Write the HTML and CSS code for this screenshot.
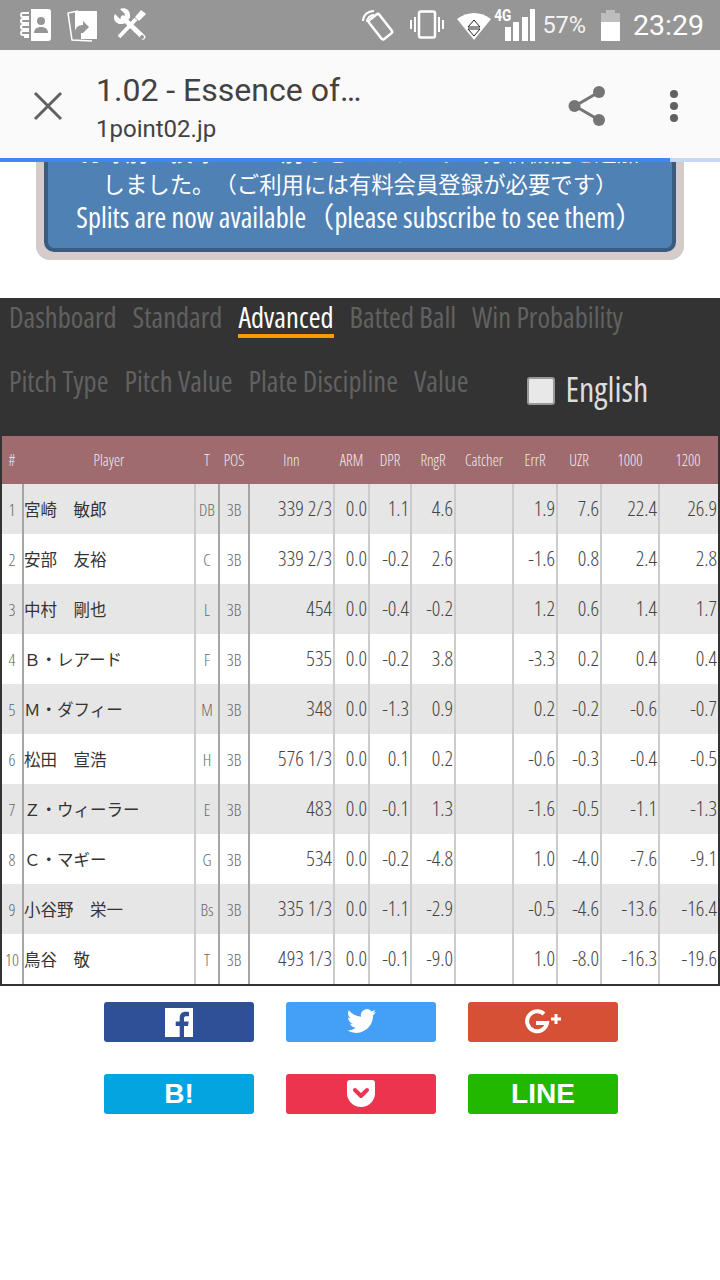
FILE: index.html
```html
<!DOCTYPE html>
<html lang="en">
<head>
    <meta charset="UTF-8">
    <meta name="viewport" content="width=device-width, initial-scale=1.0">
    <title>1.02 - Essence of Baseball</title>
    <link rel="stylesheet" href="styles.css">
</head>
<body>
    <header class="chrome">
        <div class="status-bar">
            <div class="status-left">
                <svg width="32" height="34" viewBox="0 0 32 34"><path fill="#fff" d="M11 1h17a3 3 0 0 1 3 3v26a3 3 0 0 1-3 3H11z"/><circle cx="21" cy="13" r="4" fill="#969696"/><path fill="#969696" d="M14 25c0-4 3-6 7-6s7 2 7 6z"/><path fill="none" stroke="#fff" stroke-width="2" d="M9 5H3a2 2 0 0 0 0 4h6M9 11H3a2 2 0 0 0 0 4h6M9 17H3a2 2 0 0 0 0 4h6M9 23H3a2 2 0 0 0 0 4h6M9 29H4"/></svg>
                <svg width="32" height="34" viewBox="0 0 32 34"><path fill="#fff" d="M14 2h16v28H14v-6h2l6-6-6-6v4c-4 0-7 2-8 6V2z" transform="translate(0 1)"/><path fill="none" stroke="#fff" stroke-width="1.5" d="M11 3 1 5l4 27 20 1"/></svg>
                <svg width="34" height="34" viewBox="0 0 34 34"><path fill="none" stroke="#fff" stroke-width="5" stroke-linecap="round" d="M9 10 29 29"/><path fill="#fff" d="M1 6 6 11l4-1 1-4L6 1c5-2 10 1 10 6 0 2 0 3-1 4l-4 4c-1 1-3 1-4 1-5 0-9-5-6-10z"/><path fill="none" stroke="#fff" stroke-width="4" d="M5 29 22 11"/><path fill="#fff" d="m21 9 6-7 5 4-7 7z"/><circle cx="28" cy="29" r="2" fill="#969696"/></svg>
            </div>
            <div class="status-right">
                <svg width="34" height="32" viewBox="0 0 34 32"><path fill="none" stroke="#fff" stroke-width="2" d="M1 12C1 6 6 2 12 2M5 13c0-4 3-7 7-7"/><rect x="12" y="6" width="13" height="24" rx="2" fill="none" stroke="#fff" stroke-width="2.5" transform="rotate(-38 18 18)"/></svg>
                <svg class="icon-vibrate" width="36" height="30" viewBox="0 0 36 30"><rect x="10" y="1.500" width="16" height="26" rx="2" fill="none" stroke="#fff" stroke-width="2.500"/><path fill="#fff" d="M1 10h2v9H1zM5 7h2v15H5zM29 7h2v15h-2zM33 10h2v9h-2z"/></svg>
                <svg class="icon-wifi" width="34" height="28" viewBox="0 0 34 28"><path fill="#fff" d="M0 7c10-8 24-8 34 0L17 28z"/><path fill="none" stroke="#222" stroke-width="1" d="M11 15 17 8l6 7zM11 17h12l-6 7z"/></svg>
                <div class="signal">
                    <span class="signal-label">4G</span>
                    <svg width="31" height="32" viewBox="0 0 31 32"><path fill="#fff" d="M0 18h6v14H0zM8 13h6v19H8zM17 8h6v24h-6zM25 0h5v32h-5z"/></svg>
                </div>
                <span class="battery-pct">57%</span>
                <div class="battery"><div class="battery-cap"></div><div class="battery-body"></div></div>
                <span class="clock">23:29</span>
            </div>
        </div>
        <div class="toolbar">
            <svg class="close-icon" width="30" height="30" viewBox="0 0 30 30"><path stroke="#616161" stroke-width="3" d="M2 2 28 28M28 2 2 28"/></svg>
            <div class="title-block">
                <div class="page-title">1.02 - Essence of…</div>
                <div class="page-url">1point02.jp</div>
            </div>
            <svg class="share-icon" width="38" height="40" viewBox="0 0 38 40"><path stroke="#757575" stroke-width="3" fill="none" d="M31 6 7 20l24 14"/><circle cx="31" cy="6" r="6" fill="#757575"/><circle cx="6.500" cy="20" r="6" fill="#757575"/><circle cx="31" cy="34" r="6" fill="#757575"/></svg>
            <div class="more-icon"><span></span><span></span><span></span></div>
        </div>
        <div class="progress"><div class="progress-fill"></div></div>
    </header>

    <main>
        <div class="notice-wrap">
            <div class="notice">
                <p>打球別・投球ゾーン別などのスプリット分析機能を追加</p>
                <p>しました。（ご利用には有料会員登録が必要です）</p>
                <p class="notice-en">Splits are now available（please subscribe to see them）</p>
            </div>
        </div>

        <section class="panel">
            <nav class="tabs">
                <a>Dashboard</a><a>Standard</a><a class="active">Advanced</a><a>Batted Ball</a><a>Win Probability</a>
            </nav>
            <div class="tabs tabs-second">
                <a>Pitch Type</a><a>Pitch Value</a><a>Plate Discipline</a><a>Value</a>
                <label class="lang"><span class="checkbox"></span>English</label>
            </div>
            <table class="stats">
                <thead>
                    <tr><th class="c-no">#</th><th class="c-name">Player</th><th class="c-team">T</th><th class="c-pos">POS</th><th class="c-inn">Inn</th><th class="c-arm">ARM</th><th class="c-dpr">DPR</th><th class="c-rng">RngR</th><th class="c-cat">Catcher</th><th class="c-err">ErrR</th><th class="c-uzr">UZR</th><th class="c-k">1000</th><th class="c-kk">1200</th></tr>
                </thead>
                <tbody>
                    <tr><td class="no">1</td><td class="name">宮崎　敏郎</td><td class="team">DB</td><td class="pos">3B</td><td>339 2/3</td><td>0.0</td><td>1.1</td><td>4.6</td><td></td><td>1.9</td><td>7.6</td><td>22.4</td><td>26.9</td></tr>
                    <tr><td class="no">2</td><td class="name">安部　友裕</td><td class="team">C</td><td class="pos">3B</td><td>339 2/3</td><td>0.0</td><td>-0.2</td><td>2.6</td><td></td><td>-1.6</td><td>0.8</td><td>2.4</td><td>2.8</td></tr>
                    <tr><td class="no">3</td><td class="name">中村　剛也</td><td class="team">L</td><td class="pos">3B</td><td>454</td><td>0.0</td><td>-0.4</td><td>-0.2</td><td></td><td>1.2</td><td>0.6</td><td>1.4</td><td>1.7</td></tr>
                    <tr><td class="no">4</td><td class="name">Ｂ・レアード</td><td class="team">F</td><td class="pos">3B</td><td>535</td><td>0.0</td><td>-0.2</td><td>3.8</td><td></td><td>-3.3</td><td>0.2</td><td>0.4</td><td>0.4</td></tr>
                    <tr><td class="no">5</td><td class="name">Ｍ・ダフィー</td><td class="team">M</td><td class="pos">3B</td><td>348</td><td>0.0</td><td>-1.3</td><td>0.9</td><td></td><td>0.2</td><td>-0.2</td><td>-0.6</td><td>-0.7</td></tr>
                    <tr><td class="no">6</td><td class="name">松田　宣浩</td><td class="team">H</td><td class="pos">3B</td><td>576 1/3</td><td>0.0</td><td>0.1</td><td>0.2</td><td></td><td>-0.6</td><td>-0.3</td><td>-0.4</td><td>-0.5</td></tr>
                    <tr><td class="no">7</td><td class="name">Ｚ・ウィーラー</td><td class="team">E</td><td class="pos">3B</td><td>483</td><td>0.0</td><td>-0.1</td><td>1.3</td><td></td><td>-1.6</td><td>-0.5</td><td>-1.1</td><td>-1.3</td></tr>
                    <tr><td class="no">8</td><td class="name">Ｃ・マギー</td><td class="team">G</td><td class="pos">3B</td><td>534</td><td>0.0</td><td>-0.2</td><td>-4.8</td><td></td><td>1.0</td><td>-4.0</td><td>-7.6</td><td>-9.1</td></tr>
                    <tr><td class="no">9</td><td class="name">小谷野　栄一</td><td class="team">Bs</td><td class="pos">3B</td><td>335 1/3</td><td>0.0</td><td>-1.1</td><td>-2.9</td><td></td><td>-0.5</td><td>-4.6</td><td>-13.6</td><td>-16.4</td></tr>
                    <tr><td class="no">10</td><td class="name">鳥谷　敬</td><td class="team">T</td><td class="pos">3B</td><td>493 1/3</td><td>0.0</td><td>-0.1</td><td>-9.0</td><td></td><td>1.0</td><td>-8.0</td><td>-16.3</td><td>-19.6</td></tr>
                </tbody>
            </table>
        </section>

        <div class="share-grid">
            <a class="share fb"><svg width="28" height="30" viewBox="0 0 28 30"><path fill="#fff" d="M0 1h28v29h-9V19h4l.7-4.500H19v-3c0-1.500.6-2.300 2.300-2.300H24V5c-1-.1-2-.2-3.500-.2-3.500 0-5.800 2.100-5.800 6v3.700h-4V19h4v11H0z"/></svg></a>
            <a class="share tw"><svg width="32" height="28" viewBox="0 0 32 28"><path fill="#fff" d="M31 4c-1 .5-2.200.8-3.400 1 1.200-.7 2.200-1.900 2.600-3.300-1.100.7-2.400 1.200-3.800 1.500a6 6 0 0 0-10.300 5.500C11.200 8.400 6.800 6 3.800 2.300a6 6 0 0 0 1.900 8c-1 0-1.900-.3-2.700-.7 0 2.900 2 5.300 4.800 5.900-.9.200-1.800.3-2.700.1.800 2.400 3 4.100 5.600 4.200A12 12 0 0 1 2 22.300 17 17 0 0 0 28 7.200c1.200-.8 2.200-2 3-3.200z"/></svg></a>
            <a class="share gp"><svg width="38" height="28" viewBox="0 0 38 28"><path fill="none" stroke="#fff" stroke-width="4" d="M20 6a10 10 0 1 0 3 9H12"/><path stroke="#fff" stroke-width="3" d="M27 11h10M32 6v10"/></svg></a>
            <a class="share hb">B!</a>
            <a class="share pk"><svg width="28" height="28" viewBox="0 0 28 28"><path fill="#fff" d="M3 0h22a3 3 0 0 1 3 3v10a14 14 0 0 1-28 0V3a3 3 0 0 1 3-3z"/><path fill="none" stroke="#ec344e" stroke-width="4" stroke-linecap="round" stroke-linejoin="round" d="m8 10 6 6 6-6"/></svg></a>
            <a class="share ln">LINE</a>
        </div>
    </main>
</body>
</html>
```

FILE: styles.css
```css
body {
    margin: 0;
    width: 720px;
    height: 1280px;
    overflow: hidden;
    background-color: #fff;
    font-family: "Open Sans", "Noto Sans CJK JP", sans-serif;
    font-stretch: 75%;
    text-spacing-trim: space-all;
}
.chrome {
    position: absolute;
    top: 0;
    left: 0;
    width: 720px;
    z-index: 2;
    font-stretch: 100%;
}
.status-bar {
    display: flex;
    justify-content: space-between;
    align-items: center;
    height: 50px;
    background-color: #969696;
    color: #fff;
    font-family: Roboto, sans-serif;
}
.status-left {
    display: flex;
    align-items: center;
    gap: 15px;
    padding-left: 20px;
}
.status-right {
    display: flex;
    align-items: center;
    padding-right: 16px;
}
.icon-vibrate {
    margin-left: 13px;
}
.icon-wifi {
    margin-left: 12px;
    margin-top: 2px;
}
.signal {
    position: relative;
    width: 31px;
    height: 32px;
    margin-left: 8px;
}
.signal svg {
    display: block;
    margin-left: 6px;
}
.signal-label {
    position: absolute;
    left: -7px;
    top: -4px;
    font-size: 17px;
    font-weight: 700;
    transform: scaleX(0.8);
}
.battery-pct {
    margin-left: 12px;
    font-size: 23.500px;
    color: #f4f4f4;
}
.battery {
    margin-left: 15px;
    width: 19px;
}
.battery-cap {
    width: 9px;
    height: 3px;
    margin: 0 auto;
    background-color: #bdbdbd;
}
.battery-body {
    height: 28px;
    background: linear-gradient(#bdbdbd 0 9px, #fff 9px);
}
.clock {
    margin-left: 13px;
    font-size: 28.500px;
}
.toolbar {
    display: flex;
    align-items: center;
    height: 108px;
    padding-top: 4px;
    box-sizing: border-box;
    background-color: #fafafa;
    font-family: Roboto, sans-serif;
}
.close-icon {
    margin-left: 33px;
}
.title-block {
    flex: 1;
    margin-left: 33px;
}
.page-title {
    font-size: 32px;
    line-height: 42px;
    color: #424242;
}
.page-url {
    margin-top: 3px;
    font-size: 24px;
    line-height: 30px;
    color: #424242;
}
.more-icon {
    display: flex;
    flex-direction: column;
    gap: 4px;
    margin: 0 42px 0 64px;
}
.more-icon span {
    width: 8px;
    height: 8px;
    border-radius: 50%;
    background-color: #616161;
}
.progress {
    height: 4px;
    background-color: #c6d8f6;
}
.progress-fill {
    width: 670px;
    height: 4px;
    background-color: #4285f4;
}
.notice-wrap {
    margin: 0 36px;
    padding: 0 8px 8px;
    height: 252px;
    background-color: #d5cbcb;
    border-radius: 0 0 14px 14px;
}
.notice {
    box-sizing: border-box;
    height: 252px;
    padding-top: 133px;
    text-align: center;
    color: #fff;
    background-color: #4f81b5;
    border: 4px solid #3a5a80;
    border-radius: 0 0 10px 10px;
}
.notice p {
    margin: 0;
    font-size: 22.400px;
    line-height: 32px;
}
.notice .notice-en {
    font-size: 28.300px;
    white-space: nowrap;
}
.panel {
    margin-top: 38px;
    background-color: #333;
}
.tabs {
    display: flex;
    gap: 16px;
    height: 64px;
    padding-left: 9px;
    box-sizing: border-box;
    font-size: 28.500px;
}
.tabs a {
    height: 40px;
    line-height: 38px;
    color: #616161;
}
.tabs a.active {
    box-sizing: border-box;
    color: #fff;
    border-bottom: 4px solid #f90;
}
.tabs-second {
    height: 74px;
}
.lang {
    display: flex;
    align-items: center;
    gap: 10px;
    margin-left: 43px;
    height: 46px;
    margin-top: 4px;
    font-size: 34px;
    line-height: 42px;
    color: #ddd;
}
.checkbox {
    width: 28px;
    height: 28px;
    margin-top: 4px;
    box-sizing: border-box;
    border: 2px solid #999;
    border-radius: 3px;
    background-color: #e8e8e8;
}
.stats {
    width: 720px;
    table-layout: fixed;
    border-collapse: separate;
    border-spacing: 0;
    border: 2px solid #333;
    border-top: 0;
    font-size: 21px;
    font-weight: 300;
    color: #444;
    background-color: #fff;
}
.stats th {
    box-sizing: border-box;
    height: 48px;
    padding: 0 2px 0 0;
    font-size: 15.500px;
    font-weight: 300;
    color: #eee;
    background-color: #9f6b6f;
}
.stats td {
    height: 50px;
    padding: 0 1px 3px 0;
    box-sizing: border-box;
    text-align: right;
    border-right: 2px solid #ccc;
}
.stats td:last-child {
    border-right: 0;
}
.stats tbody tr:nth-child(odd) {
    background-color: #e6e6e6;
}
.stats td.no,
.stats td.team,
.stats td.pos {
    padding: 0;
    text-align: center;
    font-size: 17px;
    color: #666;
    border-right-color: #a5a5a5;
}
.stats td.name {
    text-align: left;
    padding: 0 0 1px 0;
    font-family: "Noto Sans CJK JP", sans-serif;
    font-stretch: 100%;
    font-size: 16.500px;
    font-weight: 400;
    color: #333;
}
.c-no { width: 22px; }
.c-name { width: 172px; }
.c-team { width: 24px; }
.c-pos { width: 30px; }
.c-inn { width: 85px; }
.c-arm { width: 35px; }
.c-dpr { width: 42px; }
.c-rng { width: 44px; }
.c-cat { width: 58px; }
.c-err { width: 44px; }
.c-uzr { width: 44px; }
.c-k { width: 58px; }
.share-grid {
    display: grid;
    grid-template-columns: repeat(3, 150px);
    grid-auto-rows: 40px;
    gap: 32px 32px;
    justify-content: center;
    margin-top: 16px;
    padding-left: 2px;
}
.share {
    display: flex;
    align-items: center;
    justify-content: center;
    border-radius: 3px;
    color: #fff;
    font-family: "Liberation Sans", sans-serif;
    font-stretch: 100%;
    font-weight: 700;
    font-size: 28px;
}
.fb { background-color: #2e5097; }
.tw { background-color: #449ff6; }
.gp { background-color: #d55034; }
.hb { background-color: #03a5e0; }
.pk { background-color: #ec344e; }
.ln { background-color: #22b800; }
```
